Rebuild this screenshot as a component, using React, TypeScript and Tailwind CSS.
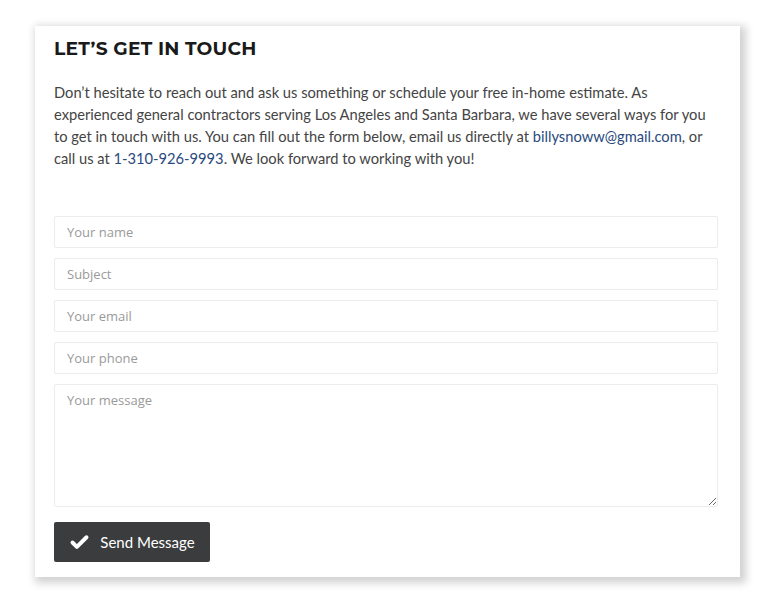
import { Check } from "lucide-react";

const fields = ["Your name", "Subject", "Your email", "Your phone"];

export default function App() {
  return (
    <div className="min-h-screen w-full bg-white pt-[26px] pl-[35px]">
      <div className="w-[705px] h-[551px] bg-white shadow-[3px_3px_8px_3px_rgba(0,0,0,0.18)] pl-[19px] pr-[22px] pt-[9px]">
        <h2
          className="text-[18.7px] font-bold text-[#1a1a1a] tracking-[0.2px]"
          style={{ fontFamily: "Montserrat, 'Open Sans', sans-serif" }}
        >
          LET’S GET IN TOUCH
        </h2>
        <p
          className="mt-[18px] text-[14.7px] leading-[22px] text-[#444] whitespace-nowrap"
          style={{ fontFamily: "Lato, 'Open Sans', sans-serif" }}
        >
          Don’t hesitate to reach out and ask us something or schedule your free in-home estimate. As
          <br />
          experienced general contractors serving Los Angeles and Santa Barbara, we have several ways for you
          <br />
          to get in touch with us. You can fill out the form below, email us directly at{" "}
          <a className="text-[#2a4a80]">billysnoww@gmail.com</a>, or
          <br />
          call us at <a className="text-[#2a4a80]">1-310-926-9993</a>. We look forward to working with you!
        </p>

        <form className="mt-[47px] flex flex-col gap-[10px]" style={{ fontFamily: "'Open Sans', sans-serif" }}>
          {fields.map((f) => (
            <input
              key={f}
              placeholder={f}
              className="h-[32px] w-full border border-[#ececec] rounded-[2px] px-[12px] text-[13px] placeholder:text-[#9a9a9a] outline-none"
            />
          ))}
          <textarea
            placeholder="Your message"
            className="h-[123px] w-full border border-[#ececec] rounded-[2px] px-[12px] py-[6px] text-[13px] placeholder:text-[#9a9a9a] outline-none"
          />
          <button
            type="button"
            className="mt-[5px] w-[156px] h-[40px] bg-[#3b3c3e] rounded-[2px] text-white text-[15px] flex items-center justify-center gap-[10px]"
            style={{ fontFamily: "Lato, sans-serif" }}
          >
            <Check size={21} strokeWidth={4.5} />
            Send Message
          </button>
        </form>
      </div>
    </div>
  );
}
